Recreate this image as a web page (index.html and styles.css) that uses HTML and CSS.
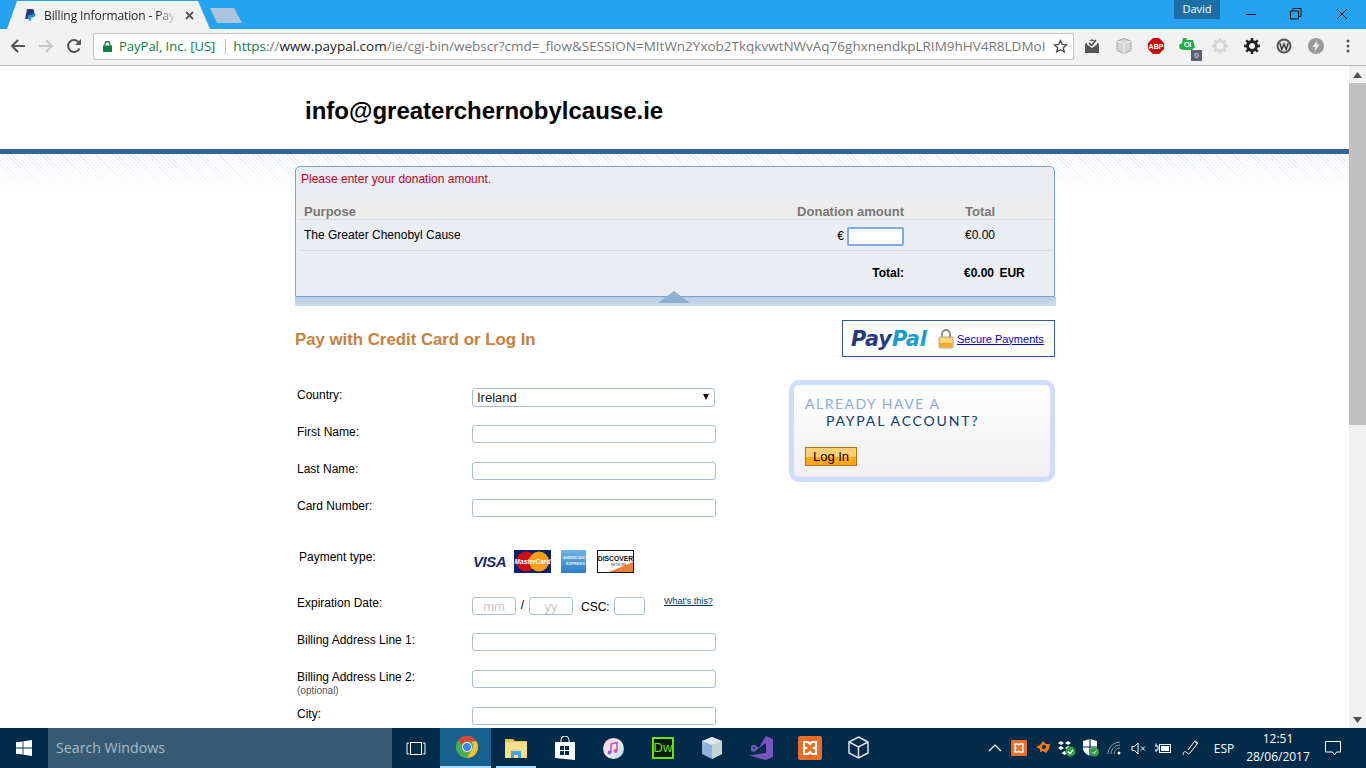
FILE: index.html
```html
<!DOCTYPE html>
<html lang="en">
<head>
    <meta charset="UTF-8">
    <meta name="viewport" content="width=device-width, initial-scale=1.0">
    <title>Billing Information - PayPal</title>
    <link rel="stylesheet" href="styles.css">
</head>
<body>
    <!-- browser tabs -->
    <div class="tabstrip">
        <div class="tab">
            <svg class="tab-icon" width="11" height="12" viewBox="0 0 11 12"><path fill="#179bd7" d="M3.5 3.5h5.7c1.6.6 1.6 2.4.7 3.700-.8 1-2 1.200-3.400 1.200l-.6 3.100H3.400z"/><path fill="#253b80" d="M2 0h4.600c2 0 3 1 2.500 3-.5 2.300-2.200 3.200-4.500 3.200H3.700L3 10H0z"/></svg>
            <span class="tab-title">Billing Information - PayPal</span>
            <svg class="tab-close" width="9" height="9" viewBox="0 0 9 9"><path d="M1 1l7 7M8 1L1 8" stroke="#555" stroke-width="1.800"/></svg>
        </div>
        <div class="newtab"></div>
        <div class="user">David</div>
        <div class="winbtn"><svg width="12" height="12" viewBox="0 0 12 12"><path d="M1 6.500h10" stroke="#111" stroke-width="1"/></svg></div>
        <div class="winbtn"><svg width="12" height="12" viewBox="0 0 12 12"><path d="M3 2.500V.5h8v8H9M.5 3h8v8h-8z" fill="none" stroke="#111" stroke-width="1"/></svg></div>
        <div class="winbtn winbtn-close"><svg width="12" height="12" viewBox="0 0 12 12"><path d="M1 1l10 10M11 1L1 11" stroke="#111" stroke-width="1"/></svg></div>
    </div>

    <!-- address bar and extensions -->
    <div class="toolbar">
        <div class="navbtn"><svg width="16" height="16" viewBox="0 0 16 16"><path d="M15 8H2M8 2L2 8l6 6" fill="none" stroke="#555" stroke-width="2"/></svg></div>
        <div class="navbtn"><svg width="16" height="16" viewBox="0 0 16 16"><path d="M1 8h13M8 2l6 6-6 6" fill="none" stroke="#c6c6c6" stroke-width="2"/></svg></div>
        <div class="navbtn"><svg width="16" height="16" viewBox="0 0 16 16"><path d="M13.500 10.500A6 6 0 1 1 13 4.500" fill="none" stroke="#555" stroke-width="2"/><path d="M15 1v6H9z" fill="#555"/></svg></div>
        <div class="omnibox">
            <svg class="lock" width="9" height="11" viewBox="0 0 9 11"><path d="M2 5V3a2.500 2.500 0 0 1 5 0v2" fill="none" stroke="#0b8043" stroke-width="1.300"/><rect y="4.500" width="9" height="6.500" fill="#0b8043"/></svg>
            <span class="site-name">PayPal, Inc. [US]</span>
            <span class="omni-divider"></span>
            <span class="url"><span class="url-scheme">https</span>://<span class="url-host">www.paypal.com</span>/ie/cgi-bin/webscr?cmd=_flow&amp;SESSION=MItWn2Yxob2TkqkvwtNWvAq76ghxnendkpLRIM9hHV4R8LDMoI</span>
            <svg class="star" width="15" height="15" viewBox="0 0 15 15"><path d="M7.500 1.500l1.800 4 4.200.4-3.200 2.800 1 4.300-3.800-2.300-3.800 2.300 1-4.300L1.500 5.900l4.200-.4z" fill="none" stroke="#444" stroke-width="1.300"/></svg>
        </div>
        <div class="extensions">
            <div class="ext"><svg width="16" height="16" viewBox="0 0 16 16"><path d="M1 6l7-5 7 5v9H1z" fill="#555"/><path d="M3 6.500V3h10v3.500L8 10z" fill="#eee"/><path d="M5 5l2.500 2.500L12 2" fill="none" stroke="#444" stroke-width="1.500"/></svg></div>
            <div class="ext"><svg width="16" height="16" viewBox="0 0 16 16"><path d="M8 .5l7 2.500v9.500L8 15.500 1 12.500V3z" fill="#d4d4d4" stroke="#aaa"/><path d="M1 3l7 2.500L15 3M8 5.500v10" fill="none" stroke="#f2f2f2"/></svg></div>
            <div class="ext"><svg width="16" height="16" viewBox="0 0 16 16"><path d="M5 0h6l5 5v6l-5 5H5l-5-5V5z" fill="#c80d0d"/><text x="8" y="10.500" class="abp-text">ABP</text></svg></div>
            <div class="ext"><svg width="18" height="18" viewBox="0 0 18 18"><path d="M4 1h3l1 2h6l2 7-3 3H5l-4-1-1-4 3-2z" fill="#19b04b"/><circle cx="8" cy="7.500" r="2.200" fill="none" stroke="#f2f2f2" stroke-width="1.200"/><path d="M11.500 5v5" stroke="#f2f2f2" stroke-width="1.200"/></svg><span class="ext-badge">0</span></div>
            <div class="ext"><svg width="16" height="16" viewBox="0 0 16 16"><circle cx="8" cy="8" r="5" fill="none" stroke="#d6d6d6" stroke-width="3"/><path d="M8 0v3M8 13v3M0 8h3M13 8h3M2.300 2.300l2 2M11.700 11.700l2 2M2.300 13.700l2-2M11.700 4.300l2-2" stroke="#d6d6d6" stroke-width="2.500"/></svg></div>
            <div class="ext"><svg width="16" height="16" viewBox="0 0 16 16"><circle cx="8" cy="8" r="4.500" fill="none" stroke="#222" stroke-width="3"/><path d="M8 0v3M8 13v3M0 8h3M13 8h3M2.300 2.300l2 2M11.700 11.700l2 2M2.300 13.700l2-2M11.700 4.300l2-2" stroke="#222" stroke-width="2.500"/></svg></div>
            <div class="ext"><svg width="16" height="16" viewBox="0 0 16 16"><circle cx="8" cy="8" r="7.500" fill="#555"/><circle cx="8" cy="8" r="5.500" fill="#ddd"/><path d="M3.800 5l2 6.500L8 6l2.200 5.500 2-6.500" fill="none" stroke="#333" stroke-width="1.300"/></svg></div>
            <div class="ext"><svg width="16" height="16" viewBox="0 0 16 16"><circle cx="8" cy="8" r="8" fill="#999"/><path d="M9.500 2L4.500 9h3l-1 5 5-7.500h-3z" fill="#f2f2f2"/></svg></div>
            <div class="ext"><svg width="4" height="14" viewBox="0 0 4 14"><circle cx="2" cy="2" r="1.500" fill="#555"/><circle cx="2" cy="7" r="1.500" fill="#555"/><circle cx="2" cy="12" r="1.500" fill="#555"/></svg></div>
        </div>
    </div>

    <div class="viewport">
        <div class="page">
            <div class="merchant">info@greaterchernobylcause.ie</div>
            <div class="bluebar"></div>

            <div class="main">
                <!-- cart -->
                <div class="cart">
                    <p class="error">Please enter your donation amount.</p>
                    <table class="cart-table">
                        <tr class="cart-head">
                            <th class="col-purpose">Purpose</th>
                            <th class="col-amount">Donation amount</th>
                            <th class="col-total">Total</th>
                        </tr>
                        <tr class="cart-row">
                            <td class="col-purpose">The Greater Chenobyl Cause</td>
                            <td class="col-amount">€<input class="amount-input" type="text"></td>
                            <td class="col-total">€0.00</td>
                        </tr>
                        <tr class="cart-sum">
                            <td></td>
                            <td class="col-amount">Total:</td>
                            <td class="col-total">€0.00 <span class="currency">EUR</span></td>
                        </tr>
                    </table>
                </div>
                <div class="cart-foot"><span class="cart-arrow"></span></div>

                <div class="title-row">
                    <h2 class="title">Pay with Credit Card or Log In</h2>
                    <div class="secure">
                        <span class="pp-logo"><span class="pp-pay">Pay</span><span class="pp-pal">Pal</span></span>
                        <svg class="padlock" width="16" height="20" viewBox="0 0 16 20"><path d="M4 9V5a4 4 0 0 1 8 0v4" fill="none" stroke="#8a8a80" stroke-width="1.800"/><rect x="1" y="8" width="14" height="11" rx="1" fill="#ffd778" stroke="#a8a48c"/><rect x="2" y="14" width="12" height="4" fill="#f4a91f"/></svg>
                        <a class="secure-link" href="#">Secure Payments</a>
                    </div>
                </div>

                <div class="checkout">
                    <form class="form">
                        <div class="row">
                            <label class="lbl">Country:</label>
                            <div class="ctl select-wrap">
                                <select class="select"><option>Ireland</option></select>
                            </div>
                        </div>
                        <div class="row">
                            <label class="lbl">First Name:</label>
                            <div class="ctl"><input class="field" type="text"></div>
                        </div>
                        <div class="row">
                            <label class="lbl">Last Name:</label>
                            <div class="ctl"><input class="field" type="text"></div>
                        </div>
                        <div class="row">
                            <label class="lbl">Card Number:</label>
                            <div class="ctl"><input class="field" type="text"></div>
                        </div>
                        <div class="row row-cards">
                            <label class="lbl lbl-indent">Payment type:</label>
                            <div class="ctl cards">
                                <span class="visa">VISA</span>
                                <svg class="card-mc" width="37" height="23" viewBox="0 0 37 23"><rect width="37" height="23" fill="#0a1f6e"/><circle cx="12" cy="11.500" r="10" fill="#cc0f16"/><circle cx="25" cy="11.500" r="10" fill="#fc9f13"/><text x="18.500" y="14" class="mc-text">MasterCard</text></svg>
                                <svg class="card-amex" width="25" height="23" viewBox="0 0 25 23"><defs><linearGradient id="amexfill" x1="0" y1="0" x2="0" y2="1"><stop offset="0" stop-color="#6fb4e6"/><stop offset="1" stop-color="#2a7fc4"/></linearGradient></defs><rect width="25" height="23" fill="url(#amexfill)"/><text x="2" y="9" class="amex-text">AMERICAN</text><text x="5" y="15" class="amex-text">EXPRESS</text></svg>
                                <svg class="card-disc" width="37" height="23" viewBox="0 0 37 23"><rect x=".5" y=".5" width="36" height="22" fill="#fff" stroke="#111"/><path d="M12 22L36 12v10z" fill="#ee7f2d"/><text x="18.500" y="11" class="disc-text">DISCOVER</text><text x="14" y="16" class="disc-sub">NETWORK</text></svg>
                            </div>
                        </div>
                        <div class="row">
                            <label class="lbl">Expiration Date:</label>
                            <div class="ctl expiry">
                                <input class="field field-date" type="text" placeholder="mm">
                                <span class="slash">/</span>
                                <input class="field field-date" type="text" placeholder="yy">
                                <span class="csc-label">CSC:</span>
                                <input class="field field-csc" type="text">
                                <a class="whats" href="#">What's this?</a>
                            </div>
                        </div>
                        <div class="row">
                            <label class="lbl">Billing Address Line 1:</label>
                            <div class="ctl"><input class="field" type="text"></div>
                        </div>
                        <div class="row">
                            <label class="lbl">Billing Address Line 2:<small class="optional">(optional)</small></label>
                            <div class="ctl"><input class="field" type="text"></div>
                        </div>
                        <div class="row">
                            <label class="lbl">City:</label>
                            <div class="ctl"><input class="field" type="text"></div>
                        </div>
                    </form>

                    <div class="login-box">
                        <div class="login-line1">ALREADY HAVE A</div>
                        <div class="login-line2">PAYPAL ACCOUNT?</div>
                        <button class="login-btn" type="button">Log In</button>
                    </div>
                </div>
            </div>
        </div>

        <div class="scrollbar">
            <div class="sb-arrow"><svg width="9" height="6" viewBox="0 0 9 6"><path d="M4.500 0L9 6H0z" fill="#505050"/></svg></div>
            <div class="sb-track"><div class="sb-thumb"></div></div>
            <div class="sb-arrow"><svg width="9" height="6" viewBox="0 0 9 6"><path d="M4.500 6L9 0H0z" fill="#505050"/></svg></div>
        </div>
    </div>

    <!-- windows taskbar -->
    <div class="taskbar">
        <div class="start"><svg width="16" height="16" viewBox="0 0 16 16"><path fill="#fff" d="M0 2.300l6.600-.9v6.200H0zM7.400 1.300L16 0v7.600H7.400zM0 8.400h6.600v6.200L0 13.700zM7.400 8.400H16V16l-8.600-1.300z"/></svg></div>
        <div class="search">Search Windows</div>
        <div class="taskview"><svg width="20" height="13" viewBox="0 0 20 13"><path d="M3 1H1v11h2M17 1h2v11h-2" fill="none" stroke="#fff"/><rect x="4.500" y=".5" width="11" height="12" fill="none" stroke="#fff"/></svg></div>
        <div class="app app-active">
            <svg width="22" height="22" viewBox="0 0 22 22"><circle cx="11" cy="11" r="11" fill="#4caf50"/><path d="M11 0a11 11 0 0 1 9.500 5.500H11a5.500 5.500 0 0 0-5 3.300L2 3.700A11 11 0 0 1 11 0z" fill="#db4437"/><path d="M20.500 5.500A11 11 0 0 1 11 22l4.800-8.200A5.500 5.500 0 0 0 15 5.500z" fill="#fbc02d"/><circle cx="11" cy="11" r="5" fill="#fff"/><circle cx="11" cy="11" r="4" fill="#4285f4"/></svg>
        </div>
        <div class="app app-open">
            <svg width="22" height="20" viewBox="0 0 22 20"><path d="M0 1h8l2 2h12v3H0z" fill="#e8c04c"/><rect y="4" width="22" height="16" fill="#fcdf86"/><path d="M6 20v-7h10v7h-3v-3H9v3z" fill="#3aa6e4"/></svg>
        </div>
        <div class="app">
            <svg width="20" height="24" viewBox="0 0 20 24"><path d="M6 6V4a4 4 0 0 1 8 0v2" fill="none" stroke="#fff"/><path d="M0 6h20v18L0 22z" fill="#fff"/><path fill="#012b49" d="M5 10h4v4H5zM10 10h4v4h-4zM5 15h4v4H5zM10 15h4v4h-4z"/></svg>
        </div>
        <div class="app">
            <svg width="21" height="21" viewBox="0 0 21 21"><defs><linearGradient id="tunes" x1="0" y1="0" x2="1" y2="1"><stop offset="0" stop-color="#f6c6d8"/><stop offset=".5" stop-color="#f3eef3"/><stop offset="1" stop-color="#a9d8f2"/></linearGradient></defs><circle cx="10.500" cy="10.500" r="10.500" fill="url(#tunes)"/><path d="M8 14.500V6l6-1.500V13" fill="none" stroke="#c04fb0" stroke-width="1.500"/><circle cx="6.500" cy="14.500" r="2" fill="#8a5cd0"/><circle cx="12.500" cy="13" r="2" fill="#e0569a"/></svg>
        </div>
        <div class="app"><span class="dw">Dw</span></div>
        <div class="app">
            <svg width="20" height="22" viewBox="0 0 20 22"><path d="M10 0l10 4v13l-10 5-10-5V4z" fill="#8fb4dc"/><path d="M10 0l10 4-10 4L0 4z" fill="#dfe8ec"/><path d="M10 8l10-4v13l-10 5z" fill="#c5d3d6"/></svg>
        </div>
        <div class="app">
            <svg width="24" height="24" viewBox="0 0 24 24"><path d="M17 0l7 3v18l-7 3L0 19.500 17 17V7l-7 5-5-3.500L2 10v5l3-1 5-2.500" fill="#7a55c2"/><path d="M5 9L2 10.500v4L5 16l5-4z" fill="#7a55c2"/><path d="M4.200 10.500v3L6.500 12zM12 12l5 3.500v-7z" fill="#012b49"/></svg>
        </div>
        <div class="app">
            <svg width="24" height="24" viewBox="0 0 24 24"><rect width="24" height="24" rx="2" fill="#e86f27"/><path d="M6 6h4l2 2 2-2h4v5l-2 1 2 1v5h-4l-2-2-2 2H6v-5l2-1-2-1z" fill="none" stroke="#fff" stroke-width="2"/></svg>
        </div>
        <div class="app">
            <svg width="21" height="24" viewBox="0 0 21 24"><path d="M10.500 1L20 6v11l-9.500 5L1 17V6z" fill="none" stroke="#dfe6ec" stroke-width="1.500"/><path d="M1 6l9.500 5L20 6M10.500 11v11" fill="none" stroke="#dfe6ec" stroke-width="1.500"/></svg>
        </div>

        <div class="tray">
            <div class="tray-item"><svg width="14" height="8" viewBox="0 0 14 8"><path d="M1 7l6-6 6 6" fill="none" stroke="#fff" stroke-width="1.200"/></svg></div>
            <div class="tray-item"><svg width="16" height="16" viewBox="0 0 16 16"><rect width="16" height="16" rx="1" fill="#e86f27"/><path d="M4 4h3l1 1 1-1h3v3l-1 1 1 1v3H9l-1-1-1 1H4V9l1-1-1-1z" fill="none" stroke="#fff" stroke-width="1.400"/></svg></div>
            <div class="tray-item"><svg width="16" height="16" viewBox="0 0 16 16"><path d="M8 1l3 3 4 0-1 5-3 4-3-2-3 1 0-3-4-2 4-2z" fill="#f27a1a"/><circle cx="9" cy="7" r="2" fill="#012b49"/></svg></div>
            <div class="tray-item"><svg width="18" height="18" viewBox="0 0 18 18"><path d="M3 2l3 2-3 2-3-2zM10 2l3 2-3 2-3-2zM3 7l3 2-3 2-3-2zM10 7l3 2-3 2-3-2zM6.500 12l3 2-3 2-3-2z" fill="#fff"/><circle cx="12.500" cy="12.500" r="5" fill="#2f9e44"/><path d="M10 12.500l2 2 3-3.500" fill="none" stroke="#fff" stroke-width="1.200"/></svg></div>
            <div class="tray-item"><svg width="18" height="18" viewBox="0 0 18 18"><path d="M1 2l7-2 7 2v7c0 4-3 6-7 8-4-2-7-4-7-8z" fill="#fff"/><path d="M8 0v17M1 8h14" stroke="#012b49" stroke-width="1.200"/><circle cx="12.500" cy="13" r="4.500" fill="#2f9e44"/><path d="M10.500 13l1.500 1.500 2.500-3" fill="none" stroke="#fff"/></svg></div>
            <div class="tray-item"><svg width="16" height="14" viewBox="0 0 16 14"><path d="M1 13a12 12 0 0 1 12-12M4 13a9 9 0 0 1 9-9M7 13a6 6 0 0 1 6-6" fill="none" stroke="#8a9aa6"/><circle cx="12" cy="12" r="1.500" fill="#fff"/></svg></div>
            <div class="tray-item"><svg width="16" height="13" viewBox="0 0 16 13"><path d="M1 4.500h2.500L7 1v11L3.500 8.500H1z" fill="none" stroke="#fff"/><path d="M10 4.500l4 4M14 4.500l-4 4" stroke="#fff"/></svg></div>
            <div class="tray-item"><svg width="16" height="12" viewBox="0 0 16 12"><rect x="4.500" y="2.500" width="11" height="8" fill="none" stroke="#fff"/><rect x="6" y="4" width="8" height="5" fill="#fff"/><path d="M0 4h3v4H0M1 1.500V4M1 8v2" stroke="#fff" fill="none"/></svg></div>
            <div class="tray-pen"><svg width="18" height="18" viewBox="0 0 18 18"><path d="M2 16c-2-2 0-4 2-3s2 3 4 1l7-9c1-2-2-4-3-2L6 11" fill="none" stroke="#fff"/><path d="M12 2l4 3" stroke="#fff"/></svg></div>
            <div class="tray-lang">ESP</div>
            <div class="tray-clock"><div>12:51</div><div>28/06/2017</div></div>
            <div class="tray-notif"><svg width="16" height="16" viewBox="0 0 16 16"><path d="M.5 1.500h15v10.500h-4l-2 3-2-3h-7z" fill="none" stroke="#fff"/></svg></div>
        </div>
    </div>
</body>
</html>
```

FILE: styles.css
```css
* {
    box-sizing: border-box;
}

html, body {
    margin: 0;
    height: 768px;
    overflow: hidden;
}

body {
    display: flex;
    flex-direction: column;
    font-family: "Liberation Sans", Arial, sans-serif;
    background: #fff;
}

/* tabs */
.tabstrip {
    height: 29px;
    flex: none;
    display: flex;
    background: #26a3f0;
    color: #222;
}

.tab {
    width: 203px;
    height: 28px;
    margin: 1px 0 0 7px;
    background: #f2f2f2;
    clip-path: polygon(0 100%, 10px 0, 191px 0, 100% 100%);
    display: flex;
    align-items: center;
    padding-left: 18px;
    font-family: "Open Sans", sans-serif;
    font-size: 12px;
}

.tab-icon {
    flex: none;
}

.tab-title {
    width: 133px;
    margin-left: 8px;
    white-space: nowrap;
    overflow: hidden;
    letter-spacing: -0.1px;
    -webkit-mask-image: linear-gradient(to right, #000 85%, transparent);
    mask-image: linear-gradient(to right, #000 85%, transparent);
}

.tab-close {
    margin-left: 8px;
}

.newtab {
    width: 32px;
    height: 15px;
    margin-top: 8px;
    background: #a9c4dc;
    clip-path: polygon(0 0, 24px 0, 100% 100%, 7px 100%);
}

.user {
    margin-left: auto;
    margin-right: 8px;
    width: 46px;
    height: 19px;
    background: #1b6fa5;
    color: #fff;
    font-family: "Open Sans", sans-serif;
    font-size: 11px;
    line-height: 18px;
    text-align: center;
}

.winbtn {
    width: 45px;
    height: 26px;
    display: flex;
    align-items: center;
    justify-content: center;
    padding-top: 1px;
}

.winbtn-close {
    width: 48px;
}

/* address bar */
.toolbar {
    height: 37px;
    flex: none;
    display: flex;
    align-items: center;
    padding: 0 0 2px 4px;
    background: #f2f2f2;
    border-bottom: 1px solid #b9b9b9;
}

.navbtn {
    width: 28px;
    display: flex;
    justify-content: center;
}

.omnibox {
    width: 981px;
    height: 27px;
    margin-left: 5px;
    padding: 0 5px 0 9px;
    display: flex;
    align-items: center;
    background: #fff;
    border: 1px solid #c4c4c4;
    border-radius: 2px;
    font-family: "Open Sans", sans-serif;
    font-size: 13px;
    color: #777;
    white-space: nowrap;
}

.lock {
    flex: none;
}

.site-name {
    margin-left: 7px;
    color: #0b8043;
}

.omni-divider {
    width: 1px;
    height: 15px;
    margin: 0 7px 0 10px;
    background: #bbb;
}

.url {
    flex: 1;
    overflow: hidden;
    font-size: 13.5px;
}

.url-scheme {
    color: #0b8043;
}

.url-host {
    color: #222;
}

.star {
    flex: none;
    margin-left: 8px;
}

.extensions {
    display: flex;
    margin-left: 2px;
}

.ext {
    width: 32px;
    height: 20px;
    display: flex;
    align-items: center;
    justify-content: center;
    position: relative;
}

.abp-text {
    font-size: 7px;
    font-weight: bold;
    fill: #fff;
    text-anchor: middle;
}

.ext-badge {
    position: absolute;
    right: 2px;
    bottom: -5px;
    width: 11px;
    height: 11px;
    background: #5c6274;
    color: #eee;
    font-size: 8px;
    line-height: 11px;
    text-align: center;
}

/* page area */
.viewport {
    height: 662px;
    flex: none;
    display: flex;
}

.page {
    flex: 1;
    overflow: hidden;
}

.merchant {
    height: 83px;
    padding: 31px 0 0 305px;
    font-size: 24px;
    font-weight: bold;
    line-height: 28px;
    color: #000;
}

.bluebar {
    height: 5px;
    background: #336699;
}

.main {
    padding: 12px 0 0 295px;
    background:
        linear-gradient(rgba(255, 255, 255, 0.1), #fff) 0 0 / 100% 41px no-repeat,
        repeating-linear-gradient(45deg, #e4ebf3 0, #e4ebf3 1px, #fff 1px, #fff 3px) 0 0 / 100% 41px no-repeat;
}

/* cart */
.cart {
    width: 760px;
    height: 131px;
    padding: 5px 2px 0 4px;
    background: #eaeef3;
    border: 1px solid #7ba3cf;
    border-radius: 5px 5px 0 0;
}

.error {
    margin: 0 0 0 1px;
    height: 14px;
    font-size: 12px;
    line-height: 14px;
    color: #c8001e;
}

.cart-table {
    width: 752px;
    margin-top: 13px;
    border-collapse: collapse;
    table-layout: fixed;
    font-size: 12px;
    color: #000;
}

.cart-head th {
    height: 20px;
    padding: 0;
    background: #eeeded;
    border-bottom: 1px solid #d8dcdf;
    color: #777;
    font-size: 13px;
    font-weight: bold;
    text-align: left;
    vertical-align: bottom;
}

.cart-row td {
    height: 31px;
    padding: 0;
    border-bottom: 1px solid #d8dcdf;
}

.cart-row .col-amount {
    padding-top: 4px;
}

.cart-sum td {
    height: 46px;
    padding: 0;
    font-weight: bold;
}

.col-purpose {
    width: 480px;
    padding-left: 4px !important;
}

.col-amount {
    width: 124px;
    text-align: right !important;
}

.col-total {
    width: 148px;
    padding-left: 61px !important;
}

.cart-sum .col-total {
    padding-left: 60px !important;
}

.amount-input {
    width: 57px;
    height: 19px;
    margin: 0 0 0 3px;
    vertical-align: middle;
    border: 2px solid #7ea9ea;
    border-radius: 2px;
    background: #fff;
}

.currency {
    margin-left: 2px;
}

.cart-foot {
    position: relative;
    width: 761px;
    height: 9px;
    background: linear-gradient(#b5cde3, #cbdcee);
}

.cart-arrow {
    position: absolute;
    left: 363px;
    top: -6px;
    width: 32px;
    height: 12px;
    background: #8fb0d0;
    clip-path: polygon(50% 0, 100% 100%, 0 100%);
}

.title-row {
    width: 760px;
    height: 37px;
    margin-top: 14px;
    display: flex;
    justify-content: space-between;
    align-items: center;
}

.title {
    margin: 2px 0 0;
    font-size: 16.800px;
    font-weight: bold;
    color: #c8803e;
}

.secure {
    width: 213px;
    height: 37px;
    padding-left: 8px;
    display: flex;
    align-items: center;
    border: 1px solid #2f5ba5;
    background: #fff;
}

.pp-logo {
    width: 77px;
    font-family: "DejaVu Sans", sans-serif;
    font-size: 20.800px;
    font-weight: bold;
    font-style: italic;
    white-space: nowrap;
}

.pp-pay {
    color: #253b80;
}

.pp-pal {
    color: #179bd7;
}

.padlock {
    margin-left: 10px;
    flex: none;
}

.secure-link {
    margin-left: 3px;
    font-size: 11px;
    color: #0000cc;
}

/* form */
.checkout {
    width: 760px;
    margin-top: 23px;
    display: flex;
    justify-content: space-between;
}

.form {
    width: 470px;
    padding-top: 8px;
    font-size: 12px;
}

.row {
    height: 37px;
    display: grid;
    grid-template-columns: 175px 1fr;
    padding-left: 2px;
}

.row-cards {
    height: 46px;
    margin-top: 14px;
}

.row-cards + .row .ctl {
    margin-top: 1px;
}

.lbl {
    line-height: 14px;
    color: #000;
}

.lbl-indent {
    padding-left: 2px;
}

.optional {
    display: block;
    margin-top: 1px;
    font-size: 10px;
    line-height: 12px;
    color: #555;
}

.field {
    display: block;
    width: 244px;
    height: 18px;
    margin: 0;
    padding: 0 3px;
    background: #fff;
    border: 1px solid #a9bcd3;
    border-radius: 3px;
}

.select-wrap {
    position: relative;
    width: 243px;
}

.select-wrap::after {
    content: "";
    position: absolute;
    right: 6px;
    top: 6px;
    border-left: 3.500px solid transparent;
    border-right: 3.500px solid transparent;
    border-top: 6px solid #111;
}

.select {
    display: block;
    width: 243px;
    height: 19px;
    margin: 0;
    padding: 0 0 0 4px;
    appearance: none;
    -webkit-appearance: none;
    background: #fff;
    border: 1px solid #a9bcd3;
    border-radius: 3px;
    font-family: "Liberation Sans", Arial, sans-serif;
    font-size: 13px;
    color: #222;
}

.cards {
    display: flex;
    align-items: flex-start;
}

.visa {
    width: 42px;
    padding-left: 1px;
    margin-top: 3px;
    font-size: 15px;
    font-weight: bold;
    font-style: italic;
    color: #1a2a6c;
    letter-spacing: -0.5px;
}

.card-amex {
    margin-left: 10px;
}

.card-disc {
    margin-left: 11px;
}

.mc-text {
    font-size: 6.500px;
    font-weight: bold;
    font-style: italic;
    fill: #fff;
    text-anchor: middle;
}

.amex-text {
    font-size: 4px;
    font-weight: bold;
    fill: #e6f1fa;
}

.disc-text {
    font-size: 6.800px;
    font-weight: bold;
    fill: #111;
    text-anchor: middle;
}

.disc-sub {
    font-size: 3px;
    fill: #333;
}

.expiry {
    display: flex;
    align-items: flex-start;
    font-size: 12px;
}

.field-date {
    width: 44px;
    text-align: center;
    font-size: 13px;
}

.field-date::placeholder {
    color: #c8c8c8;
}

.field-csc {
    width: 31px;
}

.slash {
    width: 13px;
    text-align: center;
    line-height: 17px;
}

.csc-label {
    margin-left: 8px;
    width: 33px;
    line-height: 20px;
    font-size: 12px;
}

.whats {
    margin: -1px 0 0 19px;
    font-size: 9px;
    color: #003366;
    white-space: nowrap;
}

/* log in box */
.login-box {
    width: 266px;
    height: 102px;
    padding: 10px 0 0 11px;
    background: linear-gradient(#fff, #f0f0f0);
    border: 5px solid #cddcff;
    border-radius: 10px;
    font-family: Lato, sans-serif;
    font-size: 14px;
    line-height: 17px;
    letter-spacing: 1.800px;
}

.login-line1 {
    color: #8cacd8;
    letter-spacing: 1.500px;
}

.login-line2 {
    padding-left: 21px;
    color: #0a3a78;
}

.login-btn {
    display: block;
    width: 52px;
    height: 19px;
    margin-top: 18px;
    padding: 0;
    background: linear-gradient(#ffcf78 50%, #ffa619 50%);
    border: 1px solid #b5700f;
    font-family: "Liberation Sans", Arial, sans-serif;
    font-size: 13px;
    line-height: 16px;
    letter-spacing: 0;
    color: #000;
}

/* scrollbar */
.scrollbar {
    width: 17px;
    flex: none;
    display: flex;
    flex-direction: column;
    background: #f1f1f1;
}

.sb-arrow {
    height: 17px;
    display: flex;
    align-items: center;
    justify-content: center;
}

.sb-track {
    flex: 1;
}

.sb-thumb {
    height: 342px;
    background: #c1c1c1;
}

/* taskbar */
.taskbar {
    height: 40px;
    flex: none;
    display: flex;
    background: #012b49;
}

.start {
    width: 48px;
    display: flex;
    align-items: center;
    justify-content: center;
}

.search {
    width: 344px;
    padding-left: 8px;
    background: #365a72;
    color: #a8bac6;
    font-family: "Open Sans", sans-serif;
    font-size: 14.200px;
    line-height: 40px;
}

.taskview {
    width: 48px;
    display: flex;
    align-items: center;
    justify-content: center;
}

.app {
    width: 49px;
    display: flex;
    align-items: center;
    justify-content: center;
    position: relative;
}

.app-active {
    width: 51px;
    padding-left: 3px;
    background: #18618f;
    border-bottom: 2px solid #a8dcff;
}

.app-open::after {
    content: "";
    position: absolute;
    left: 5px;
    right: 4px;
    bottom: 0;
    height: 2px;
    background: #a8dcff;
}

.dw {
    width: 22px;
    height: 22px;
    background: #0a1a06;
    border: 2px solid #6fe000;
    color: #6fe000;
    font-family: "Liberation Sans", Arial, sans-serif;
    font-size: 13px;
    line-height: 18px;
    text-align: center;
}

.tray {
    margin-left: auto;
    margin-right: 15px;
    display: flex;
    align-items: center;
    color: #fff;
    font-family: "Open Sans", sans-serif;
    font-size: 12px;
}

.tray-item {
    width: 24px;
    display: flex;
    justify-content: center;
}

.tray-pen {
    width: 32px;
    display: flex;
    justify-content: center;
}

.tray-lang {
    width: 34px;
    text-align: center;
}

.tray-clock {
    width: 74px;
    text-align: center;
    line-height: 18px;
}

.tray-notif {
    width: 36px;
    display: flex;
    justify-content: center;
}
```
